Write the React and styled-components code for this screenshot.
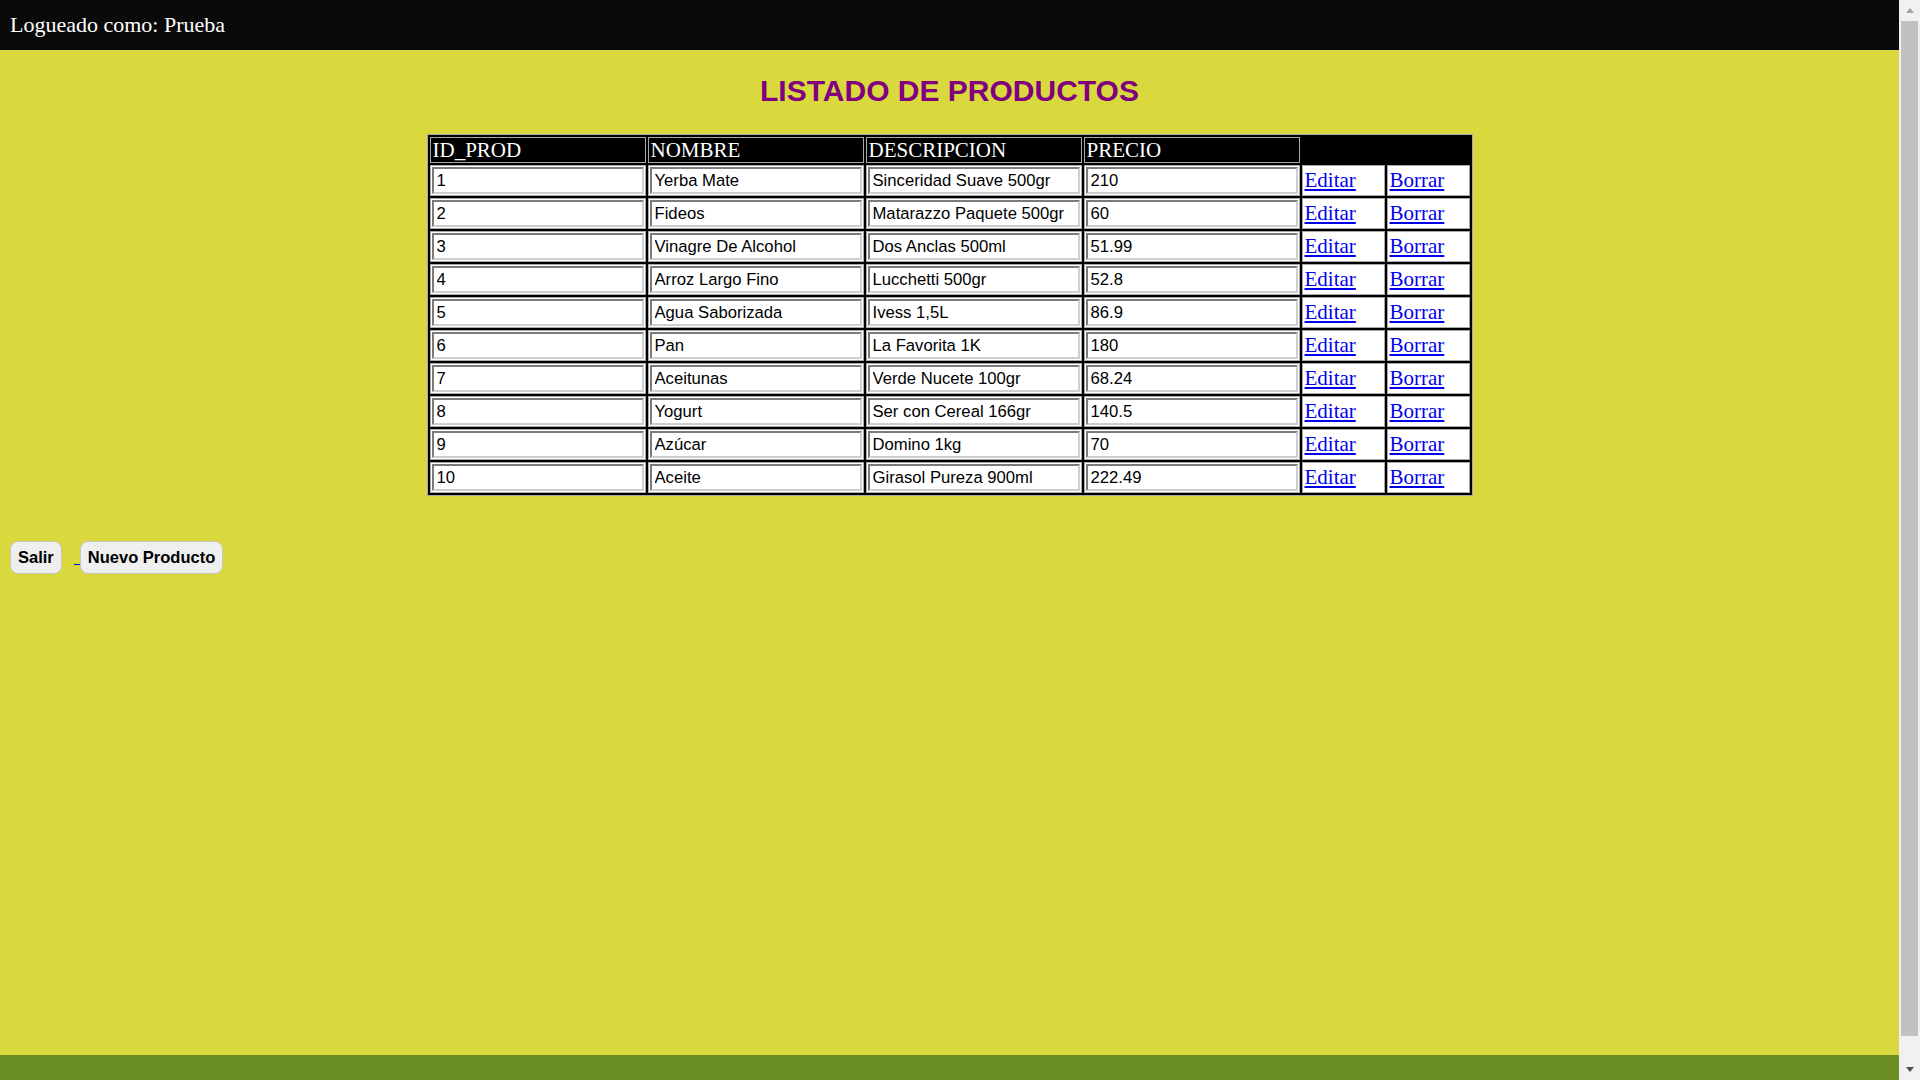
import styled, { createGlobalStyle } from "styled-components";

const GlobalStyle = createGlobalStyle`
    body {
        margin: 0;
        background: #d9d93e;
        font-family: "Liberation Serif", "Times New Roman", serif;
    }
`;

const productos = [
    { id: 1, nombre: "Yerba Mate", descripcion: "Sinceridad Suave 500gr", precio: "210" },
    { id: 2, nombre: "Fideos", descripcion: "Matarazzo Paquete 500gr", precio: "60" },
    { id: 3, nombre: "Vinagre De Alcohol", descripcion: "Dos Anclas 500ml", precio: "51.99" },
    { id: 4, nombre: "Arroz Largo Fino", descripcion: "Lucchetti 500gr", precio: "52.8" },
    { id: 5, nombre: "Agua Saborizada", descripcion: "Ivess 1,5L", precio: "86.9" },
    { id: 6, nombre: "Pan", descripcion: "La Favorita 1K", precio: "180" },
    { id: 7, nombre: "Aceitunas", descripcion: "Verde Nucete 100gr", precio: "68.24" },
    { id: 8, nombre: "Yogurt", descripcion: "Ser con Cereal 166gr", precio: "140.5" },
    { id: 9, nombre: "Azúcar", descripcion: "Domino 1kg", precio: "70" },
    { id: 10, nombre: "Aceite", descripcion: "Girasol Pureza 900ml", precio: "222.49" },
];

const PageStyled = styled.div`
    display: flex;
    flex-direction: column;
    margin-right: 21px;
`;

const HeaderStyled = styled.header`
    height: 50px;
    background: #0a0a0a;
    color: #ffffff;
    display: flex;
    align-items: center;
    padding-left: 10px;
    font-size: 22px;
`;

const MainStyled = styled.main`
    min-height: 1005px;
`;

const TitleStyled = styled.h1`
    margin: 23px 0 26px;
    text-align: center;
    color: #800080;
    font-family: "Liberation Sans", Arial, sans-serif;
    font-weight: bold;
    font-size: 30px;
    line-height: 35px;
`;

const TableStyled = styled.table`
    margin: 0 auto;
    background: #000000;
    border: 1px solid #a8a8a8;
    border-spacing: 2px;
`;

const HeadCellStyled = styled.th`
    box-sizing: border-box;
    width: ${props => props.$wide ? "216px" : "auto"};
    height: 26px;
    padding: 0 2px;
    border: ${props => props.$empty ? "none" : "1px solid #a8a8a8"};
    color: #ffffff;
    font-weight: normal;
    font-size: 21px;
    text-align: left;
    line-height: 22px;
`;

const CellStyled = styled.td`
    box-sizing: border-box;
    height: 31px;
    padding: ${props => props.$link ? "0 2px" : "1px"};
    border: 1px solid #a8a8a8;
    background: #ffffff;
    width: ${props => props.$link ? "83px" : "216px"};
`;

const InputStyled = styled.input`
    box-sizing: border-box;
    display: block;
    width: 100%;
    height: 27px;
    margin: 0;
    padding: 0 3px;
    border: 2px inset #cfcfcf;
    background: #ffffff;
    color: #000000;
    font-family: "Liberation Sans", Arial, sans-serif;
    font-size: 16.67px;
    outline: none;
`;

const LinkStyled = styled.a`
    color: #0000ee;
    font-size: 21px;
    text-decoration: underline;
    cursor: pointer;
`;

const ActionsStyled = styled.div`
    display: flex;
    align-items: center;
    padding: 45px 0 0 10px;
`;

const ButtonStyled = styled.button`
    box-sizing: border-box;
    height: 33px;
    padding: 0 7px;
    border: 1px solid #c6c6c6;
    border-radius: 8px;
    background: #efefef;
    color: #000000;
    font-family: "Liberation Sans", Arial, sans-serif;
    font-weight: bold;
    font-size: 16.5px;
    cursor: pointer;
`;

const SpacerLinkStyled = styled.a`
    display: inline-block;
    width: 6px;
    height: 1px;
    margin: 14px 0 0 12px;
    background: #0000ee;
`;

const FooterStyled = styled.footer`
    height: 50px;
    background: #6b8e23;
`;

// imitación de la barra de scroll del navegador
const ScrollbarStyled = styled.div`
    position: fixed;
    top: 0;
    right: 0;
    width: 21px;
    height: 100vh;
    background: #f1f1f1;
    display: flex;
    flex-direction: column;
`;

const ScrollArrowStyled = styled.div`
    height: 21px;
    display: flex;
    align-items: center;
    justify-content: center;
    &::before {
        content: "";
        border-left: 4.5px solid transparent;
        border-right: 4.5px solid transparent;
        border-bottom: ${props => props.$down ? "0" : "5px solid #a3a3a3"};
        border-top: ${props => props.$down ? "5px solid #505050" : "0"};
    }
`;

const ScrollThumbStyled = styled.div`
    height: 1015px;
    margin: 0 2px;
    background: #c1c1c1;
`;

const ScrollTrackStyled = styled.div`
    flex: 1;
`;

const ProductRow = ({ producto }) => (
    <tr>
        <CellStyled><InputStyled readOnly value={producto.id} /></CellStyled>
        <CellStyled><InputStyled readOnly value={producto.nombre} /></CellStyled>
        <CellStyled><InputStyled readOnly value={producto.descripcion} /></CellStyled>
        <CellStyled><InputStyled readOnly value={producto.precio} /></CellStyled>
        <CellStyled $link><LinkStyled href="#">Editar</LinkStyled></CellStyled>
        <CellStyled $link><LinkStyled href="#">Borrar</LinkStyled></CellStyled>
    </tr>
);

const App = () => (
    <PageStyled>
        <GlobalStyle />
        <HeaderStyled>Logueado como: Prueba</HeaderStyled>
        <MainStyled>
            <TitleStyled>LISTADO DE PRODUCTOS</TitleStyled>
            <TableStyled>
                <thead>
                    <tr>
                        <HeadCellStyled $wide>ID_PROD</HeadCellStyled>
                        <HeadCellStyled $wide>NOMBRE</HeadCellStyled>
                        <HeadCellStyled $wide>DESCRIPCION</HeadCellStyled>
                        <HeadCellStyled $wide>PRECIO</HeadCellStyled>
                        <HeadCellStyled $empty colSpan={2}></HeadCellStyled>
                    </tr>
                </thead>
                <tbody>
                    {productos.map(p => <ProductRow key={p.id} producto={p} />)}
                </tbody>
            </TableStyled>
            <ActionsStyled>
                <ButtonStyled>Salir</ButtonStyled>
                <SpacerLinkStyled href="#" />
                <ButtonStyled>Nuevo Producto</ButtonStyled>
            </ActionsStyled>
        </MainStyled>
        <FooterStyled />
        <ScrollbarStyled>
            <ScrollArrowStyled />
            <ScrollThumbStyled />
            <ScrollTrackStyled />
            <ScrollArrowStyled $down />
        </ScrollbarStyled>
    </PageStyled>
);

export default App;
